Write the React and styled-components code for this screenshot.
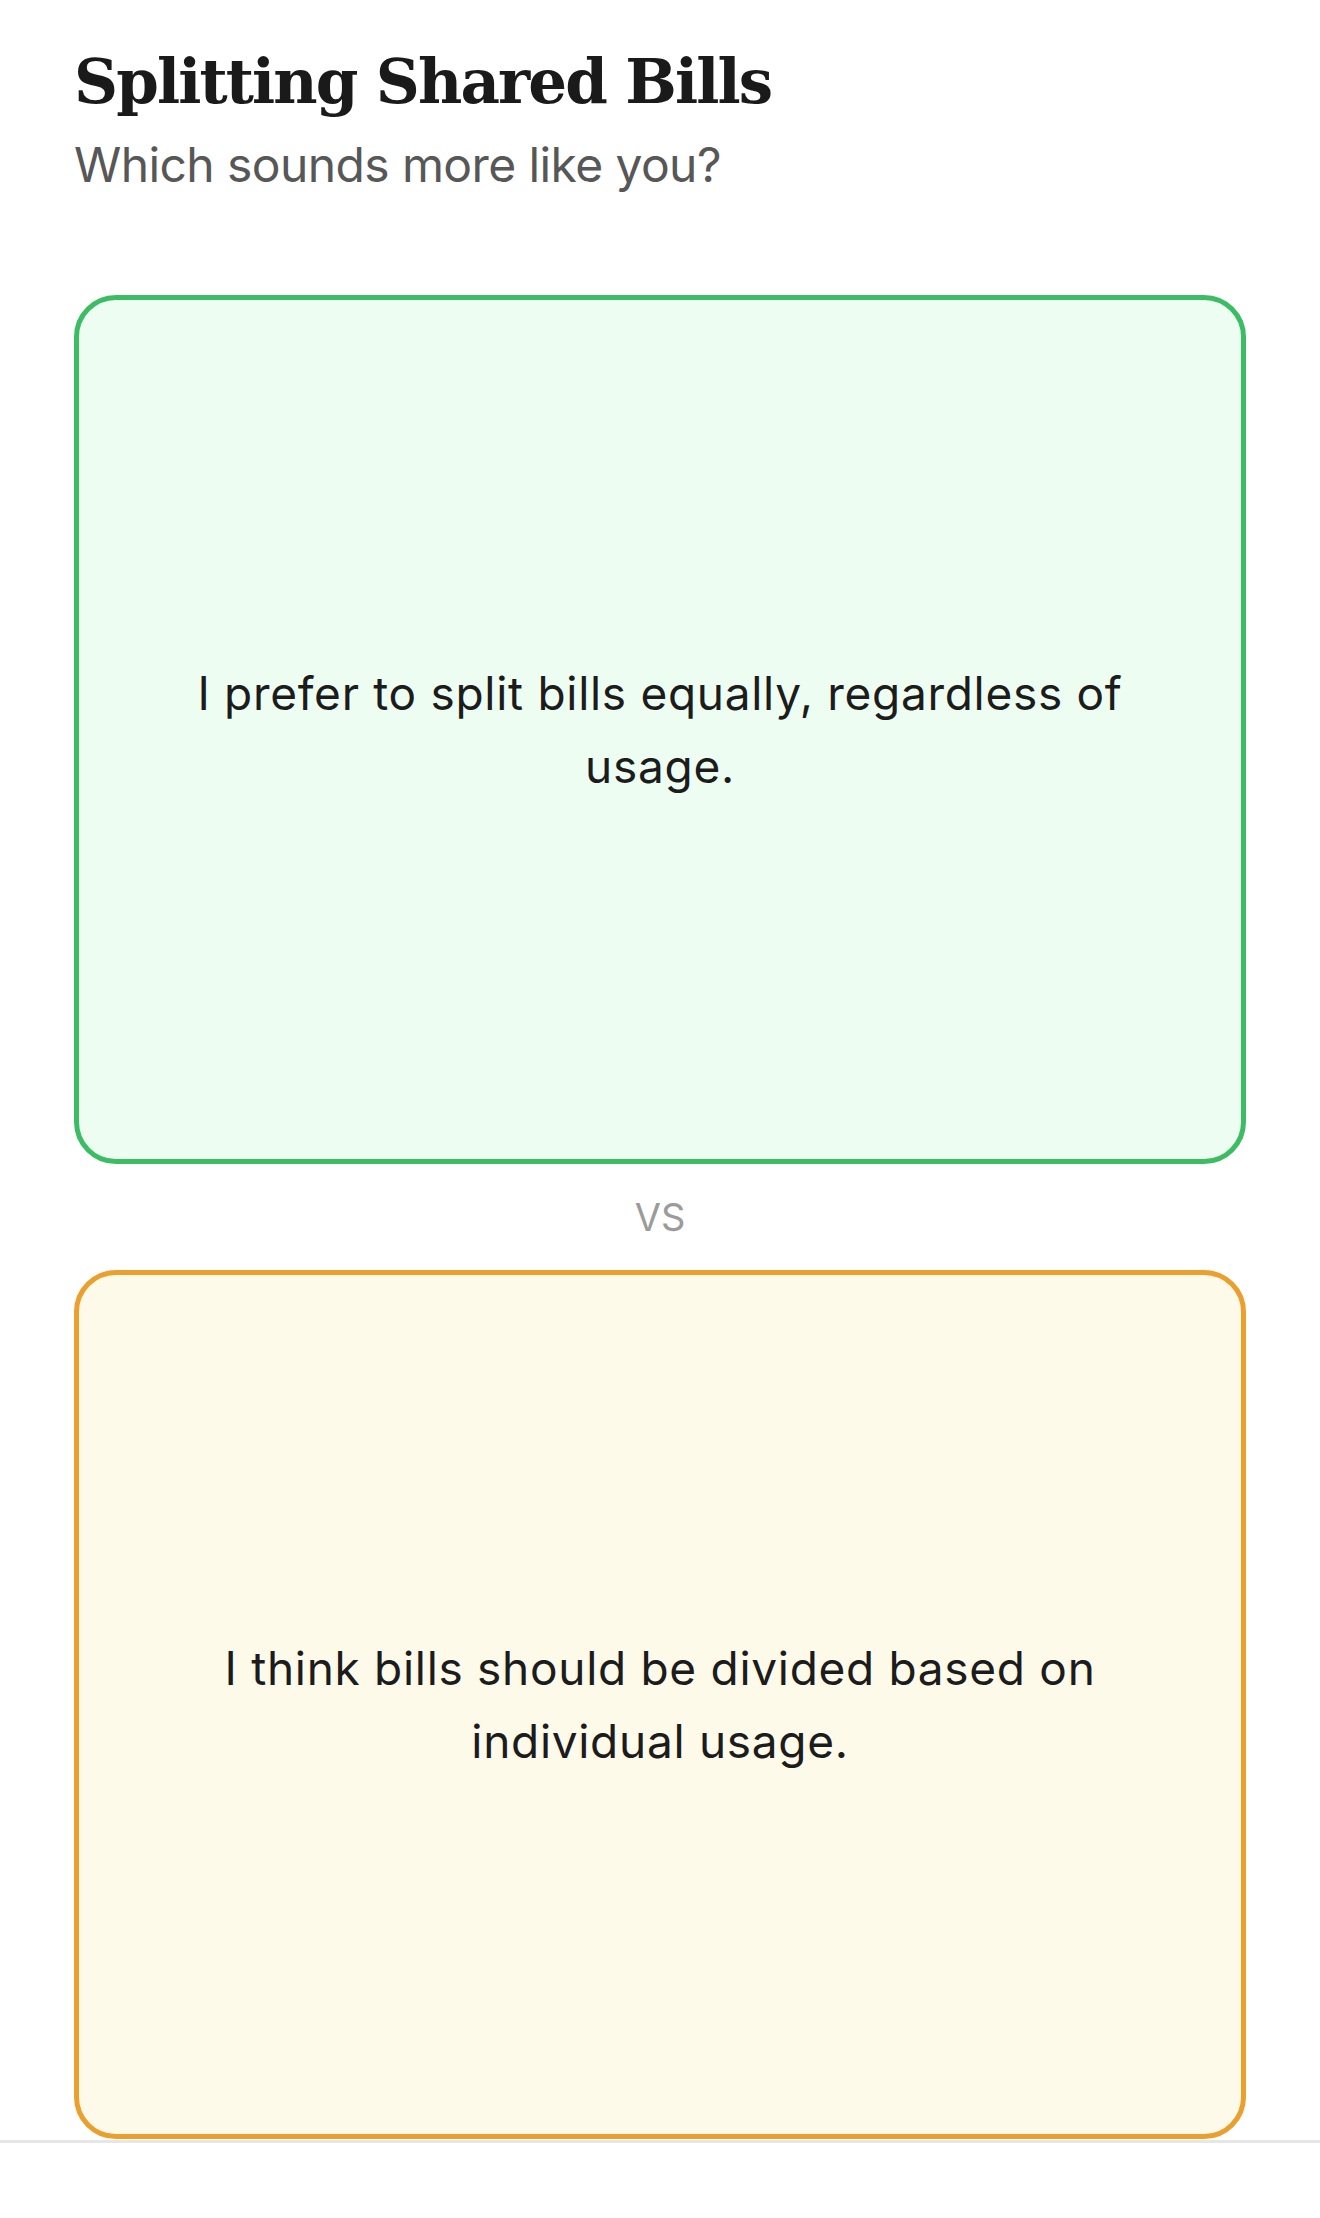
import React from 'react'
import styled, { createGlobalStyle } from 'styled-components'

const GlobalStyle = createGlobalStyle`
  html, body {
    margin: 0;
    padding: 0;
    background: #ffffff;
  }
  * {
    box-sizing: border-box;
  }
`

const options = [
  { id: 'a', text: 'I prefer to split bills equally, regardless of usage.', tone: 'green' },
  { id: 'b', text: 'I think bills should be divided based on individual usage.', tone: 'orange' },
]

const tones = {
  green: { border: '#3dbd63', bg: '#eefdf2' },
  orange: { border: '#eb9f2d', bg: '#fefaea' },
}

const App = () => {
  return (
    <Page>
      <GlobalStyle />
      <Main>
        <Header>
          <Title>Splitting Shared Bills</Title>
          <Subtitle>Which sounds more like you?</Subtitle>
        </Header>
        <Choices>
          <Card tone={options[0].tone}>
            <CardText>{options[0].text}</CardText>
          </Card>
          <Versus>VS</Versus>
          <Card tone={options[1].tone}>
            <CardText>{options[1].text}</CardText>
          </Card>
        </Choices>
      </Main>
      <Footer />
    </Page>
  )
}

const Page = styled.div`
  width: 1320px;
  min-height: 2218px;
  display: flex;
  flex-direction: column;
  background: #ffffff;
`

const Main = styled.main`
  padding: 0 74px;
  display: flex;
  flex-direction: column;
`

const Header = styled.header`
  padding-top: 44px;
  display: flex;
  flex-direction: column;
`

const Title = styled.h1`
  margin: 0;
  font-family: "DejaVu Serif", "Liberation Serif", serif;
  font-weight: 700;
  font-size: 61px;
  line-height: 76px;
  color: #1a1a1a;
  letter-spacing: -1.9px;
`

const Subtitle = styled.p`
  margin: 17px 0 0;
  font-family: Inter, "Liberation Sans", sans-serif;
  font-weight: 400;
  font-size: 48px;
  line-height: 56px;
  color: #575757;
  letter-spacing: -0.6px;
`

const Choices = styled.section`
  margin-top: 102px;
  display: flex;
  flex-direction: column;
`

const Card = styled.div`
  height: 869px;
  border: 5px solid ${p => tones[p.tone].border};
  background: ${p => tones[p.tone].bg};
  border-radius: 42px;
  display: flex;
  align-items: center;
  justify-content: center;
  padding: 0 80px;
`

const CardText = styled.p`
  margin: 0;
  max-width: 1000px;
  text-align: center;
  font-family: Inter, "Liberation Sans", sans-serif;
  font-size: 46px;
  line-height: 73px;
  color: #1c1c1c;
  letter-spacing: 0.7px;
`

const Versus = styled.div`
  height: 106px;
  display: flex;
  align-items: center;
  justify-content: center;
  font-family: Inter, "Liberation Sans", sans-serif;
  font-size: 38px;
  color: #9b9b9b;
`

const Footer = styled.footer`
  margin-top: 1px;
  height: 76px;
  border-top: 3px solid #e6e6e6;
  background: #ffffff;
`

export default App
